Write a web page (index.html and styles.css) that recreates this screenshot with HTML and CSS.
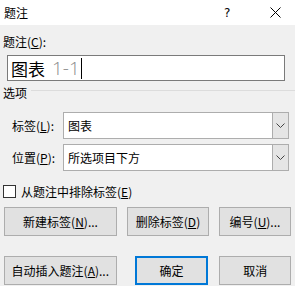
FILE: index.html
```html
<!DOCTYPE html>
<html lang="zh-CN">
<head>
  <meta charset="UTF-8">
  <title>题注</title>
  <link rel="stylesheet" href="styles.css">
</head>
<body>

<div class="dialog">
  <div class="title-bar">
    <span class="title">题注</span>
    <span class="help">?</span>
    <span class="close">
      <svg width="11" height="11" viewBox="0 0 11 11"><path d="M0.5 0.5 L10.5 10.5 M10.5 0.5 L0.5 10.5" stroke="#000" stroke-width="1" fill="none"/></svg>
    </span>
  </div>

  <div class="content">
    <div class="field-label">题注(<u>C</u>):</div>
    <div class="caption-input"><span class="cap-label">图表</span><span class="cap-num">1-1</span><span class="caret"></span></div>

    <div class="group-title">选项</div>

    <div class="combo-row">
      <span class="row-label">标签(<u>L</u>):</span>
      <div class="combo">
        <span class="combo-value">图表</span>
        <span class="combo-btn"><svg width="9" height="5" viewBox="0 0 9 5"><path d="M0.5 0.5 L4.5 4.5 L8.5 0.5" stroke="#444" fill="none"/></svg></span>
      </div>
    </div>
    <div class="combo-row second">
      <span class="row-label">位置(<u>P</u>):</span>
      <div class="combo">
        <span class="combo-value">所选项目下方</span>
        <span class="combo-btn"><svg width="9" height="5" viewBox="0 0 9 5"><path d="M0.5 0.5 L4.5 4.5 L8.5 0.5" stroke="#444" fill="none"/></svg></span>
      </div>
    </div>

    <label class="check-row">
      <span class="checkbox"></span>
      <span>从题注中排除标签(<u>E</u>)</span>
    </label>

    <div class="button-row first">
      <button class="btn btn-new">新建标签(<u>N</u>)...</button>
      <button class="btn btn-del">删除标签(<u>D</u>)</button>
      <button class="btn btn-num">编号(<u>U</u>)...</button>
    </div>
    <div class="button-row last">
      <button class="btn btn-new">自动插入题注(<u>A</u>)...</button>
      <button class="btn btn-ok">确定</button>
      <button class="btn btn-num">取消</button>
    </div>
  </div>
</div>

</body>
</html>
```

FILE: styles.css
```css
body {
  margin: 0;
  background: #f0f0f0;
  color: #000;
  font-family: "Noto Sans CJK SC", "Microsoft YaHei", sans-serif;
  font-size: 12px;
}
u {
  text-decoration: underline;
  text-underline-offset: 1px;
}
.dialog {
  width: 295px;
  height: 286px;
  overflow: hidden;
}
.title-bar {
  height: 25px;
  background: #fff;
  display: flex;
  align-items: center;
}
.title {
  padding-left: 4px;
  flex: 1;
}
.help {
  width: 10px;
  margin-right: 36px;
  font-family: "DejaVu Sans", sans-serif;
  font-size: 12px;
}
.close {
  display: flex;
  margin-right: 14px;
}
.content {
  padding: 0 4px 0 3px;
}
.field-label {
  margin-top: 9px;
  line-height: 16px;
}
.caption-input {
  margin: 5px 6px 0 4px;
  height: 24px;
  border: 1px solid #7a7a7a;
  background: #fff;
  display: flex;
  align-items: center;
  padding-left: 3px;
  font-size: 17px;
}
.cap-label {
  margin-right: 7px;
}
.cap-num {
  color: #8c8c8c;
  font-family: "Open Sans", sans-serif;
  font-weight: 300;
  font-size: 19px;
}
.caret {
  width: 1px;
  height: 21px;
  background: #000;
  margin-left: 1px;
}
.group-title {
  margin-top: 4px;
  line-height: 16px;
  display: flex;
  align-items: center;
}
.group-title::after {
  content: "";
  flex: 1;
  height: 1px;
  background: #dcdcdc;
  margin: -6px -4px 0 4px;
}
.combo-row {
  display: flex;
  align-items: center;
  margin-top: 11px;
}
.combo-row.second {
  margin-top: 5px;
}
.row-label {
  width: 51px;
  padding-left: 9px;
}
.combo {
  flex: 1;
  height: 25px;
  margin-right: 2px;
  border: 1px solid #adadad;
  background: #fff;
  display: flex;
  align-items: center;
}
.combo-value {
  flex: 1;
  padding-left: 4px;
}
.combo-btn {
  width: 15px;
  height: 25px;
  background: #e5e5e5;
  border-left: 1px solid #adadad;
  display: flex;
  align-items: center;
  justify-content: center;
}
.check-row {
  display: flex;
  align-items: center;
  margin-top: 12px;
}
.checkbox {
  width: 11px;
  height: 11px;
  border: 1px solid #333;
  background: #fff;
  margin-right: 5px;
}
.button-row {
  display: flex;
  margin-top: 7px;
}
.button-row.last {
  margin-top: 20px;
}
.btn {
  height: 29px;
  background: #e1e1e1;
  border: 1px solid #adadad;
  font-family: inherit;
  font-size: 12px;
  color: #000;
  padding: 0;
}
.btn-new {
  width: 113px;
  margin-left: 1px;
}
.btn-del {
  width: 82px;
  margin-left: 10px;
}
.btn-num {
  width: 72px;
  margin-left: 10px;
}
.btn-ok {
  width: 74px;
  margin-left: 18px;
  border: 2px solid #0078d7;
}
.button-row.last .btn-num {
  margin-left: 11px;
}
```
